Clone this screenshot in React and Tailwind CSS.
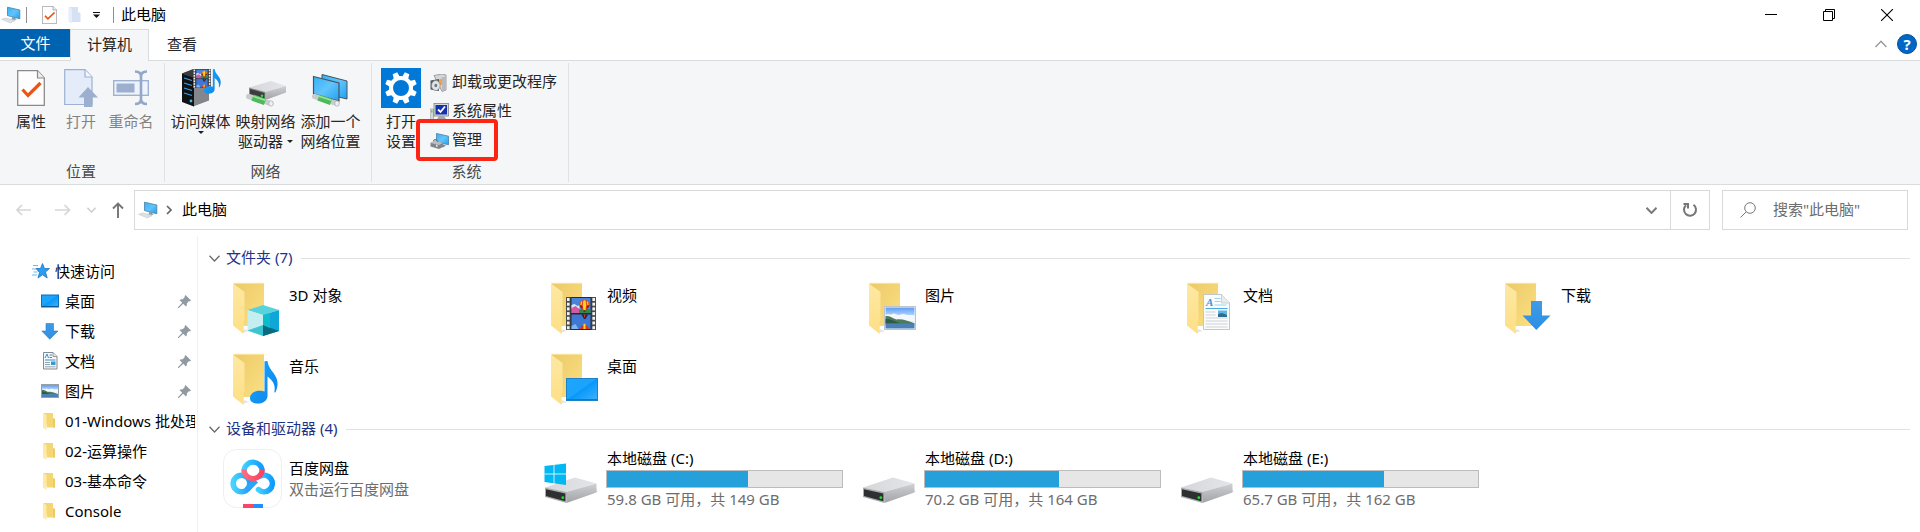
import React from 'react';

const defs = (
  <svg className="absolute h-0 w-0" aria-hidden="true">
    <defs>
      <linearGradient id="fBack" x1="0" y1="0" x2="1" y2="1">
        <stop offset="0" stopColor="#ecc968" />
        <stop offset="1" stopColor="#fbe083" />
      </linearGradient>
      <linearGradient id="fFront" x1="0" y1="0" x2="0" y2="1">
        <stop offset="0" stopColor="#fee8a3" />
        <stop offset="1" stopColor="#fddf85" />
      </linearGradient>
      <linearGradient id="screen" x1="0" y1="0" x2="1" y2="1">
        <stop offset="0" stopColor="#35b1f8" />
        <stop offset="0.5" stopColor="#62c4fb" />
        <stop offset="1" stopColor="#1fa0f2" />
      </linearGradient>
      <linearGradient id="desk" x1="0" y1="0" x2="1" y2="1">
        <stop offset="0" stopColor="#1ca7ff" />
        <stop offset="0.48" stopColor="#1ca3fc" />
        <stop offset="0.5" stopColor="#0698fa" />
        <stop offset="1" stopColor="#42b2fd" />
      </linearGradient>
      <linearGradient id="arrow" x1="0" y1="0" x2="0" y2="1">
        <stop offset="0" stopColor="#3f9be6" />
        <stop offset="1" stopColor="#2c8ee4" />
      </linearGradient>
      <linearGradient id="sky" x1="0" y1="0" x2="0" y2="1">
        <stop offset="0" stopColor="#5b9cf6" />
        <stop offset="0.5" stopColor="#cfe6fd" />
        <stop offset="1" stopColor="#e8f4fd" />
      </linearGradient>
      <linearGradient id="driveTop" x1="0" y1="0" x2="1" y2="0">
        <stop offset="0" stopColor="#d6d7da" />
        <stop offset="1" stopColor="#e4e5e8" />
      </linearGradient>
      <linearGradient id="driveSide" x1="0" y1="0" x2="0" y2="1">
        <stop offset="0" stopColor="#cfd0d3" />
        <stop offset="1" stopColor="#a2a3a6" />
      </linearGradient>
      <linearGradient id="panL" x1="0" y1="0" x2="1" y2="0">
        <stop offset="0" stopColor="#47d3fd" />
        <stop offset="1" stopColor="#1f9df8" />
      </linearGradient>
      <linearGradient id="panTop" x1="0" y1="0" x2="1" y2="0">
        <stop offset="0" stopColor="#3fd0fe" />
        <stop offset="1" stopColor="#0f9cff" />
      </linearGradient>
      <linearGradient id="panRed" x1="0" y1="0" x2="1" y2="0">
        <stop offset="0" stopColor="#fb6c80" />
        <stop offset="1" stopColor="#fc4263" />
      </linearGradient>
      <linearGradient id="note" x1="0" y1="0" x2="1" y2="1">
        <stop offset="0" stopColor="#1aa6ff" />
        <stop offset="1" stopColor="#0b84e8" />
      </linearGradient>
    </defs>
  </svg>
);

function PcIcon() {
  return (
    <svg width="20" height="18" viewBox="0 0 20 18" className="shrink-0">
      <path d="M6.500 1.200 18.800 4v8.800L6.500 9.600z" fill="url(#screen)" stroke="#4a7fa5" strokeWidth=".8" />
      <path d="M11 11.300l3.500 1v2l-3.500-1z" fill="#6c7d8a" />
      <path d="M9 13l3-.7 4 1.200-3 .9z" fill="#a9b4bd" />
      <path d="M.5 13.300 5 12l9 2.600L9.500 17z" fill="#dde1e6" stroke="#b9c0c8" strokeWidth=".5" />
    </svg>
  );
}

function CheckDoc({ className }) {
  return (
    <svg viewBox="0 0 28 36" className={className} preserveAspectRatio="none">
      <path d="M.7.7H20.500L27.300 8V35.300H.7z" fill="#fdfdfd" stroke="#8a8a8a" strokeWidth="1.300" />
      <path d="M20.500.7V8h6.800" fill="#eee" stroke="#8a8a8a" strokeWidth="1.200" />
      <path d="M5.500 19.500 11 25.500 23.500 13" fill="none" stroke="#ec5413" strokeWidth="3.200" />
    </svg>
  );
}

function OpenIcon() {
  return (
    <svg width="34" height="38" viewBox="0 0 34 38">
      <path d="M.7.700H21L28 8V35.500H.7z" fill="#e4ecfa" stroke="#9db1d3" strokeWidth="1.200" />
      <path d="M21 .7V8h7" fill="#f3f6fc" stroke="#9db1d3" strokeWidth="1.200" />
      <path d="M24 18 34 28.500H28.500V38H20V28.500H14.500z" fill="#9dafce" />
    </svg>
  );
}

function RenameIcon() {
  return (
    <svg width="36" height="36" viewBox="0 0 36 36">
      <rect x=".7" y="10.700" width="34.600" height="14.600" fill="#eef3fb" stroke="#9db1d3" strokeWidth="1.400" />
      <rect x="3.500" y="13.500" width="18" height="9" fill="#9dafce" />
      <path d="M22 1.500c4 0 6 1.500 6 5V29c0 3.500-2 5-6 5M34 1.500c-4 0-6 1.500-6 5V29c0 3.500 2 5 6 5" fill="none" stroke="#93a7c8" strokeWidth="2.600" />
    </svg>
  );
}

function Film({ x = 0, y = 0, w = 30, h = 33 }) {
  const holes = [1, 5.700, 10.400, 15.100, 19.800, 24.500, 29.200];
  return (
    <svg x={x} y={y} width={w} height={h} viewBox="0 0 30 33" preserveAspectRatio="none">
      <rect width="30" height="33" fill="#4b4b4b" />
      {holes.map((v) => (
        <g key={v} fill="#f2f2f2">
          <rect x="1" y={v} width="2.600" height="3" />
          <rect x="26.400" y={v} width="2.600" height="3" />
        </g>
      ))}
      <rect x="4.500" width="21" height="33" fill="#262a38" />
      <rect x="5.500" y="1" width="19" height="15" fill="#4a83dc" />
      <rect x="5.500" y="17.500" width="19" height="14.500" fill="#3f78d4" />
      <path d="M5.500 8l3-1 3 2 2-1v4H5.500z" fill="#d9e8fb" />
      <path d="M5.500 11l4-2 4 3 1 4h-9z" fill="#d45aa0" />
      <path d="M13 13l6-1.500 5.500 1V16H13z" fill="#2f8a4a" />
      <path d="M18.500 3c3.500 0 5 2.500 5 5 0 2.200-2 3.500-3.500 5.500h-3c-1.500-2-3.500-3.300-3.500-5.500 0-2.500 1.500-5 5-5z" fill="#d8361f" />
      <path d="M17.500 3.200h2l.8 4.800-.8 5h-2l-.8-5z" fill="#ffd21f" />
      <path d="M13.700 8.200l2 1v2.300zM23.300 8.200l-2 1v2.300z" fill="#2b1a14" />
      <path d="M15 4.500h1.500L15.500 8h-1.200zM22 4.500h-1.500l1 3.500h1.200z" fill="#ffd21f" />
      <path d="M17.500 13.500h2V15h-2z" fill="#5a3518" />
      <path d="M15.500 17.500h6.500l-2.500 4.500h-1.500z" fill="#2a2038" />
      <path d="M17.800 17.500h1.600l-.4 3h-.8z" fill="#d8361f" />
      <path d="M13.700 32a5 5.500 0 0 1 9.600 0z" fill="#d8361f" />
      <path d="M17.500 26.800h2V32h-2z" fill="#ffd21f" />
      <path d="M5.500 29l4-2 3 5h-7z" fill="#7fb4f0" />
    </svg>
  );
}

function MusicNote({ x, y, w, h }) {
  return (
    <svg x={x} y={y} width={w} height={h} viewBox="0 0 28 43" preserveAspectRatio="none">
      <path
        d="M14.500.3 17.500 0c.6 5 3 8 6 12 4.500 6 5.500 12 1.800 19.500l-1-.3c1.200-6 0-10.200-6.800-15.700V35c0 4-4 7.600-9.500 7.600C3 42.600 0 40.500 0 37.300c0-4.500 4.500-7.600 9.800-7.600 1.800 0 3.500.3 4.700.9z"
        fill="url(#note)"
      />
    </svg>
  );
}

function MediaIcon() {
  return (
    <svg width="40" height="40" viewBox="0 0 40 40">
      <path d="M1 5.500 12 1l16 4v27L12 38 1 33z" fill="#6d6e72" />
      <path d="M12 10l16-4v26.500L12 38.500z" fill="#85868b" />
      <path d="M1 5.500 13 9.500v29L1 34z" fill="#111214" />
      <path d="M1 5.500 13 1l14 3.500-15 5z" fill="#3a3b3f" />
      <path d="M3 10l8 2.500M3 15l8 2.500M3 20l8 2.500M3 25l8 2.500" stroke="#3a9fe8" strokeWidth="1.300" />
      <circle cx="10" cy="33" r="1.400" fill="#35c3f5" />
      <Film x="12" y="1" w="18" h="19" />
      <MusicNote x="23" y="1" w="17" h="25" />
    </svg>
  );
}

function Pipe({ x, y }) {
  return (
    <svg x={x} y={y} width="28" height="13" viewBox="0 0 28 13">
      <path d="M2.500 2.500 25 9.500" stroke="#c9cccf" strokeWidth="5" strokeLinecap="round" />
      <path d="M6.500 3.500 19 8" stroke="#4dbb5c" strokeWidth="6.500" />
      <path d="M7 2.300 19.500 6.300" stroke="#9be29f" strokeWidth="1.600" />
      <ellipse cx="25" cy="9.500" rx="2.200" ry="2.700" fill="#eef0f1" stroke="#9da2a5" strokeWidth=".6" />
    </svg>
  );
}

function NetDriveIcon() {
  return (
    <svg width="40" height="40" viewBox="0 0 40 40">
      <path d="M3 19.500 25 13l15 5-20.500 6z" fill="url(#driveTop)" />
      <path d="M19.500 24 40 18v6.500L19.500 32z" fill="url(#driveSide)" />
      <path d="M3 19.500 19.500 24v8L3 26.500z" fill="#8d8e90" />
      <path d="M4 20.900 18.500 25v5.500L4 26z" fill="#3c3d3f" />
      <circle cx="16" cy="27.700" r="1.200" fill="#2ee43b" />
      <Pipe x="0" y="26" />
    </svg>
  );
}

function NetPlaceIcon() {
  return (
    <svg width="38" height="40" viewBox="0 0 38 40">
      <path d="M10 6.500 35 13v18L10 25z" fill="url(#screen)" stroke="#46545e" strokeWidth="1" />
      <path d="M1.500 8.500 27 15v18L1.500 26z" fill="url(#screen)" stroke="#46545e" strokeWidth="1.200" />
      <Pipe x="0" y="26" />
    </svg>
  );
}

function GearIcon() {
  const teeth = [22.5, 67.5, 112.5, 157.5, 202.5, 247.5, 292.5, 337.5];
  return (
    <svg width="40" height="40" viewBox="0 0 40 40">
      <rect width="40" height="40" fill="#0078d7" />
      <circle cx="20" cy="20" r="10" fill="none" stroke="#fff" strokeWidth="4" />
      {teeth.map((a) => (
        <path key={a} d="M16.800 9.500 17.600 4h4.800l.8 5.500z" fill="#fff" transform={`rotate(${a} 20 20)`} />
      ))}
    </svg>
  );
}

function UninstallIcon() {
  return (
    <svg width="18" height="18" viewBox="0 0 18 18">
      <path d="M4 1.500 12 0l4 1v15l-4 1.500z" fill="#d5d6d8" stroke="#8f9194" strokeWidth=".8" />
      <path d="M12 3h3v13l-3 1z" fill="#b9babd" />
      <path d="M8 6l4-1.500v6L9 12z" fill="#f0a24c" />
      <path d="M.5 6.500 9 5v12L.5 15.500z" fill="#55585c" />
      <ellipse cx="5.800" cy="11.500" rx="4.300" ry="5" fill="#dfe3e6" stroke="#7e8387" strokeWidth=".7" />
      <ellipse cx="5.800" cy="11.500" rx="1.400" ry="1.700" fill="#6f7478" />
    </svg>
  );
}

function SysPropIcon() {
  return (
    <svg width="19" height="18" viewBox="0 0 19 18">
      <rect x="0" y="6" width="3.500" height="11.500" fill="#d6d7d9" stroke="#8b8d90" strokeWidth=".6" />
      <rect x="1" y="7.500" width="1.500" height="2" fill="#3bdc3f" />
      <rect x="4" y=".5" width="14.500" height="12.500" fill="#d9dadc" stroke="#808286" strokeWidth=".8" />
      <rect x="5.500" y="2" width="11.500" height="9.500" fill="#1431b0" />
      <path d="M8 6.500 10.500 9 15 3.500" fill="none" stroke="#fff" strokeWidth="1.800" />
      <path d="M9 13h5l3 4.500H6z" fill="#a5a7aa" />
    </svg>
  );
}

function ManageIcon() {
  return (
    <svg width="19" height="18" viewBox="0 0 19 18">
      <path d="M6.500 1.500 18.500 4.200v8.600L6.500 10z" fill="url(#screen)" stroke="#4a7fa5" strokeWidth=".8" />
      <path d="M12 12l4 1.500-3 2z" fill="#7d8a94" />
      <path d="M.5 11 5 8.500 13 11v4L9 17 .5 14.500z" fill="#7f858a" />
      <path d="M.5 11 5 8.500 13 11 9 13z" fill="#b9bdc1" />
      <path d="M3.500 9c0-2 3.500-2 4.500.8" fill="none" stroke="#5d6368" strokeWidth="1" />
      <path d="M6 12.500l1.500.4v2l-1.500-.4z" fill="#e7e9ea" />
    </svg>
  );
}

function Landscape({ x, y, w, h }) {
  return (
    <svg x={x} y={y} width={w} height={h} viewBox="0 0 32 24" preserveAspectRatio="none">
      <rect x=".5" y=".5" width="31" height="23" fill="#fff" stroke="#bcc5cf" />
      <rect x="1.500" y="1.500" width="29" height="21" fill="url(#sky)" />
      <path d="M1.500 9c3-2 5 .5 7-1s4 1 6 1 4-2 7-.5 6-.5 9 1V15h-29z" fill="#f2f8fe" />
      <path d="M1.500 10c4-.5 7 2 11 3.500 5-1 11 1 18 4v1h-29z" fill="#4c7a5d" />
      <path d="M1.500 13c5 0 9 2 15 4.500H1.500z" fill="#2e5b47" />
      <path d="M1.500 17.500h29v5h-29z" fill="#4a80b5" />
    </svg>
  );
}

function DocPage({ x, y, w, h }) {
  return (
    <svg x={x} y={y} width={w} height={h} viewBox="0 0 27 36">
      <path d="M.5.5H18.500L26.500 9V35.500H.5z" fill="#fafbfc" stroke="#c2c6ca" />
      <path d="M18.500.5V9h8" fill="#e9ebee" stroke="#c2c6ca" strokeWidth=".8" />
      <text x="3" y="12" fontSize="11" fontStyle="italic" fontWeight="bold" fontFamily="Liberation Serif, serif" fill="#3c95d0">A</text>
      <path d="M11.500 4.500h6M11.500 7.500h6M11.500 11h12" stroke="#9fd2ee" />
      <path d="M2.500 14.500h22" stroke="#4aa9dc" />
      <path d="M2.500 18h10M2.500 21h10M2.500 24h22M2.500 27h22M2.500 30h22M2.500 33h22" stroke="#cfd3d7" />
      <rect x="15" y="16.500" width="9" height="6.500" fill="#5fb4e8" />
      <path d="M15 20l4-1 5 2v2h-9z" fill="#2f6d8d" />
    </svg>
  );
}

function FolderTile({ kind }) {
  return (
    <svg width="60" height="60" viewBox="0 0 60 60" className="shrink-0">
      <path d="M20 54l7-2-5-2z" fill="#e6e6e6" />
      <path d="M11.500 4.300H42V47H20z" fill="url(#fBack)" />
      <path d="M11.500 4.300H42.500" stroke="#fbe59b" />
      <path d="M11 4.500 22.500 13V41l-.8 1.500V55L11 46.500z" fill="url(#fFront)" />
      {kind === '3d' && (
        <g>
          <path d="M41 26 57 31 41 36 25.500 31z" fill="#57d3de" />
          <path d="M25.500 31 41 36V57L25.500 51.500z" fill="#c4eef2" />
          <path d="M57 31 41 36V57L57 52z" fill="#0fa7d8" />
          <path d="M41 46 57 52 41 57z" fill="#0a6a80" />
          <path d="M41 46 25.500 51.500 41 57z" fill="#3cc5cf" />
          <path d="M41 36l7-2v15l-7-3z" fill="#0ebbcd" />
        </g>
      )}
      {kind === 'video' && <Film x="26" y="18" />}
      {kind === 'pic' && <Landscape x="26" y="27" w="32" h="24" />}
      {kind === 'doc' && <DocPage x="27" y="15" w="27" h="36" />}
      {kind === 'down' && <path d="M37 22H48V36.500H56.500L42.300 51 28.500 36.500H37z" fill="url(#arrow)" />}
      {kind === 'music' && <MusicNote x="28" y="11" w="28" h="43" />}
      {kind === 'desk' && (
        <g>
          <rect x="26.500" y="28.500" width="31" height="22" fill="url(#desk)" stroke="#1b82c8" />
          <path d="M27 49.500h30" stroke="#1579ba" />
        </g>
      )}
    </svg>
  );
}

function DriveIcon({ windows }) {
  return (
    <svg width="60" height="60" viewBox="0 0 60 60" className="shrink-0">
      <path d="M26 53 58 42.500 56 40z" fill="#e4e4e4" />
      <path d="M5 38.500 35 28.500 56.500 34.500 26 43z" fill="url(#driveTop)" />
      <path d="M26 43 56.500 34.500v9L26.500 54z" fill="url(#driveSide)" />
      <path d="M5 38.500 26.500 43V54L5 48z" fill="#a9aaac" />
      <path d="M6 40.300 25.300 44.500v7.800L6 47z" fill="#2e2f30" />
      <circle cx="22.800" cy="48.700" r="1.400" fill="#22e02d" />
      {windows && (
        <g>
          <path d="M4.500 17 26 14.500V36L4.500 33z" fill="#00b9f4" />
          <path d="M14 15v20M4.500 25H26" stroke="#e6f8fe" strokeWidth=".9" />
        </g>
      )}
    </svg>
  );
}

function NetdiskIcon() {
  return (
    <svg width="60" height="60" viewBox="0 0 60 60" className="shrink-0">
      <rect x="1.500" y=".5" width="58" height="58" rx="13" fill="#fff" stroke="#efefef" />
      <circle cx="19.500" cy="34.500" r="8.300" fill="none" stroke="url(#panL)" strokeWidth="5.600" />
      <path d="M25 40.500 34 31.500" stroke="#2aa5f8" strokeWidth="5.600" />
      <path d="M36.500 40.700a8.300 8.300 0 1 0 1.500-13.500" fill="none" stroke="url(#panTop)" strokeWidth="5.600" strokeLinecap="round" />
      <path d="M22 22.300a9 9 0 0 1 18.200 0" fill="none" stroke="url(#panTop)" strokeWidth="5.200" />
      <path d="M22 20.500a9.100 9.100 0 1 0 18.200 0" fill="none" stroke="url(#panRed)" strokeWidth="5.200" />
      <rect x="21" y="55" width="10" height="4" fill="#fb4467" />
      <rect x="31" y="55" width="10" height="4" fill="#2190fb" />
    </svg>
  );
}

function SideIcon({ kind }) {
  return (
    <svg width="18" height="18" viewBox="0 0 18 18" className="shrink-0">
      {kind === 'desk' && (
        <g>
          <rect x=".5" y="3" width="17" height="12" fill="url(#desk)" stroke="#0f6fb5" />
          <path d="M1 14.500h16" stroke="#0b5a96" />
        </g>
      )}
      {kind === 'down' && <path d="M5 1.500h7.500V9H17L8.800 17.300.8 9H5z" fill="url(#arrow)" stroke="#2b7dc4" strokeWidth=".6" />}
      {kind === 'doc' && (
        <g>
          <path d="M2.500.5H12L16 4.500V17H2.500z" fill="#f6f8fa" stroke="#85898d" />
          <path d="M12 .5v4h4" fill="#dfe3e6" stroke="#85898d" strokeWidth=".8" />
          <path d="M4 6l2-4 1.500 4M8.500 3h2.500M8.500 5.500h2.500M4 8h10.500" stroke="#2f95d2" fill="none" />
          <path d="M4 10.500h5M4 12.500h5M4 14.800h10.500" stroke="#8fa5b3" />
          <rect x="10" y="9.500" width="4.500" height="3.500" fill="#3a97d0" />
        </g>
      )}
      {kind === 'pic' && (
        <g>
          <Landscape x="0" y="2" w="18" h="14" />
          <rect x=".5" y="2.500" width="17" height="13" fill="none" stroke="#999fa5" />
        </g>
      )}
      {kind === 'folder' && (
        <g>
          <path d="M2.500 1H12v5l2 1v8.500H6z" fill="#f5d675" />
          <path d="M2 1 5.500 3v15L2 15.500z" fill="#fee9a6" />
          <path d="M12 6l2 1v8.500h-2z" fill="#eec964" />
        </g>
      )}
    </svg>
  );
}

function Pin() {
  return (
    <svg width="13" height="13" viewBox="0 0 13 13" className="ml-auto mr-1 shrink-0">
      <path d="M7.500 0 13 5.500l-1.200 1-.8-.4L8.800 8.500c.3 1.200 0 2.200-.8 3L5.200 8.800.8 13H0v-.8L4.200 7.800 1.500 5c.8-.8 2-1 3.200-.8l2.200-2.200-.4-.8z" fill="#8f9aa3" />
    </svg>
  );
}

const Caret = ({ className = '' }) => (
  <svg width="6" height="3" viewBox="0 0 6 3" className={className}>
    <path d="M0 0h6L3 3z" fill="#222" />
  </svg>
);

const Chevron = ({ w = 11, h = 7, color = '#6b6b6b', sw = 1.3, up, className = '' }) => (
  <svg width={w} height={h} viewBox="0 0 11 7" className={className}>
    <path d={up ? 'M.5 6.200 5.500 1l5 5.200' : 'M.5.800l5 5.200 5-5.200'} fill="none" stroke={color} strokeWidth={sw} />
  </svg>
);

function BigButton({ icon, lines, width, disabled, caret, below }) {
  return (
    <button type="button" disabled={disabled} className={`flex flex-col items-center ${width} ${disabled ? 'text-[#838383]' : 'text-[#262626]'}`}>
      <span className="mb-[3px] flex h-10 items-center justify-center">{icon}</span>
      {lines.map((l, i) => (
        <span key={l} className="flex items-center gap-1 whitespace-nowrap leading-5">
          {l}
          {caret && i === lines.length - 1 && <Caret />}
        </span>
      ))}
      {below && <Caret />}
    </button>
  );
}

function SmallButton({ icon, label, marked }) {
  return (
    <button type="button" className="relative flex h-[29px] w-fit items-center gap-[3px] whitespace-nowrap text-[#262626]">
      <span className="flex w-[19px]">{icon}</span>
      <span className="pb-[2px]">{label}</span>
      {marked && <span className="absolute -left-[14px] -right-[16px] -top-[7px] -bottom-[6px] rounded border-4 border-[#fd2414]" />}
    </button>
  );
}

function Group({ label, padding, children }) {
  return (
    <section className={`flex flex-col border-r border-[#dfe1e3] ${padding}`} aria-label={label}>
      <div className="flex min-h-[87px] pt-[5px]">{children}</div>
      <div className="mt-auto pb-px text-center leading-5 text-[#4a4a4a]">{label}</div>
    </section>
  );
}

function SectionHeader({ text }) {
  return (
    <h2 className="flex h-4 items-center text-[#1e3287]">
      <Chevron className="mr-[6px]" />
      <span className="whitespace-nowrap pb-[2px]">{text}</span>
      <span className="ml-[9px] mr-[10px] h-px flex-1 bg-[#e2e2e2]" />
    </h2>
  );
}

const folders = [
  ['3D 对象', '3d'],
  ['视频', 'video'],
  ['图片', 'pic'],
  ['文档', 'doc'],
  ['下载', 'down'],
  ['音乐', 'music'],
  ['桌面', 'desk'],
];

const drives = [
  { name: '本地磁盘 (C:)', info: '59.8 GB 可用，共 149 GB', used: 60, windows: true },
  { name: '本地磁盘 (D:)', info: '70.2 GB 可用，共 164 GB', used: 57 },
  { name: '本地磁盘 (E:)', info: '65.7 GB 可用，共 162 GB', used: 60 },
];

const quick = [
  ['桌面', 'desk', true],
  ['下载', 'down', true],
  ['文档', 'doc', true],
  ['图片', 'pic', true],
  ['01-Windows 批处理', 'folder'],
  ['02-运算操作', 'folder'],
  ['03-基本命令', 'folder'],
  ['Console', 'folder'],
];

export default function App() {
  return (
    <div className="flex min-h-screen flex-col bg-white font-['Noto_Sans','Noto_Sans_CJK_SC',sans-serif] text-[15px] text-black">
      {defs}
      <header className="flex h-[29px] items-center">
        <span className="ml-px"><PcIcon /></span>
        <span className="ml-[5px] h-4 w-px bg-[#8f8f8f]" />
        <button type="button" aria-label="属性" className="ml-[15px]"><CheckDoc className="h-[18px] w-[15px]" /></button>
        <button type="button" aria-label="新建文件夹" className="ml-[11px]">
          <svg width="13" height="18" viewBox="0 0 13 18">
            <path d="M1 1h9v5l2.500 1v9H4z" fill="#d5e2f4" />
            <path d="M.5 1 4 3v14.500L.5 15.500z" fill="#e6eefa" />
          </svg>
        </button>
        <button type="button" aria-label="自定义快速访问工具栏" className="ml-3">
          <svg width="7" height="6" viewBox="0 0 7 6">
            <path d="M0 .5h7" stroke="#111" />
            <path d="M0 2.500h7L3.500 6z" fill="#111" />
          </svg>
        </button>
        <span className="ml-[13px] h-4 w-px bg-[#8f8f8f]" />
        <h1 className="ml-[7px]">此电脑</h1>
        <div className="ml-auto mr-1 flex h-full">
          <button type="button" aria-label="最小化" className="flex w-[58px] items-center justify-center">
            <svg width="12" height="12" viewBox="0 0 12 12"><path d="M0 5.500h12" stroke="#000" /></svg>
          </button>
          <button type="button" aria-label="还原" className="flex w-[58px] items-center justify-center">
            <svg width="12" height="12" viewBox="0 0 12 12" fill="none" stroke="#000"><path d="M.5 2.500h9v9h-9zM2.500 2V.5h9v9H10" /></svg>
          </button>
          <button type="button" aria-label="关闭" className="flex w-[58px] items-center justify-center">
            <svg width="12" height="12" viewBox="0 0 12 12"><path d="M0 0 12 12M12 0 0 12" stroke="#000" strokeWidth="1.100" /></svg>
          </button>
        </div>
      </header>

      <nav className="flex h-8 border-b border-[#dadbdc]" role="tablist">
        <button type="button" role="tab" className="h-7 w-[70px] bg-[#0063b1] pl-px text-white">文件</button>
        <button type="button" role="tab" aria-selected="true" className="h-8 w-[79px] border-x border-t border-[#dadbdc] bg-[#f5f6f7] pb-[2px] text-[#262626]">计算机</button>
        <button type="button" role="tab" className="h-[30px] w-[66px] text-[#262626]">查看</button>
        <div className="ml-auto mr-[3px] flex h-[30px] items-center gap-[10px]">
          <button type="button" aria-label="折叠功能区"><Chevron up w={12} h={8} color="#9a9a9a" /></button>
          <button type="button" aria-label="帮助" className="flex h-5 w-5 items-center justify-center rounded-full border border-[#0a4f92] bg-[#0067c8] font-bold leading-none text-white">?</button>
        </div>
      </nav>

      <div className="flex h-[124px] border-b border-[#dadbdc] bg-[#f5f6f7] py-[2px]">
        <Group label="位置" padding="pl-[6px] pr-2">
          <BigButton width="w-[50px]" lines={['属性']} icon={<CheckDoc className="h-9 w-7" />} />
          <BigButton width="w-[50px]" lines={['打开']} disabled icon={<OpenIcon />} />
          <BigButton width="w-[50px]" lines={['重命名']} disabled icon={<RenameIcon />} />
        </Group>
        <Group label="网络" padding="pl-[3px] pr-2">
          <BigButton width="w-[65px]" lines={['访问媒体']} below icon={<MediaIcon />} />
          <BigButton width="w-[65px]" lines={['映射网络', '驱动器']} caret icon={<NetDriveIcon />} />
          <BigButton width="w-[65px]" lines={['添加一个', '网络位置']} icon={<NetPlaceIcon />} />
        </Group>
        <Group label="系统" padding="pl-[4px] pr-[11px]">
          <BigButton width="w-[50px]" lines={['打开', '设置']} icon={<GearIcon />} />
          <div className="ml-1 flex flex-col">
            <SmallButton icon={<UninstallIcon />} label="卸载或更改程序" />
            <SmallButton icon={<SysPropIcon />} label="系统属性" />
            <SmallButton icon={<ManageIcon />} label="管理" marked />
          </div>
        </Group>
      </div>

      <div className="flex items-center pb-[6px] pl-4 pr-3 pt-[5px]">
        <button type="button" aria-label="后退" disabled>
          <svg width="16" height="12" viewBox="0 0 16 12" fill="none" stroke="#d6d6d6" strokeWidth="1.700"><path d="M15 6H1M6 1 1 6l5 5" /></svg>
        </button>
        <button type="button" aria-label="前进" disabled className="ml-[23px]">
          <svg width="16" height="12" viewBox="0 0 16 12" fill="none" stroke="#d6d6d6" strokeWidth="1.700"><path d="M0 6h14M9.500 1l5 5-5 5" /></svg>
        </button>
        <button type="button" aria-label="最近浏览的位置" className="ml-4"><Chevron w={9} h={6} color="#d0d0d0" sw={2} /></button>
        <button type="button" aria-label="上移" className="ml-4">
          <svg width="12" height="16" viewBox="0 0 12 16" fill="none" stroke="#757575" strokeWidth="1.900"><path d="M6 16V1.500M1 6.500l5-5 5 5" /></svg>
        </button>
        <div className="ml-[10px] flex h-10 flex-1 items-center border border-[#d9d9d9] pl-[3px]">
          <PcIcon />
          <svg width="6" height="10" viewBox="0 0 6 10" className="ml-2 mr-[10px]"><path d="M1 1l4 4-4 4" fill="none" stroke="#666" strokeWidth="1.700" /></svg>
          <span className="pb-[2px]">此电脑</span>
          <button type="button" aria-label="历史记录" className="ml-auto mr-[13px]"><Chevron color="#7b7b7b" sw={2} /></button>
          <button type="button" aria-label="刷新" className="flex h-full w-[39px] items-center justify-center border-l border-[#d9d9d9]">
            <svg width="16" height="16" viewBox="0 0 16 16" fill="none" stroke="#757575" strokeWidth="2"><path d="M11.500 2.800A6 6 0 1 1 4 3.200" /><path d="M1.500 2H6v4.500" /></svg>
          </button>
        </div>
        <label className="ml-3 flex h-10 w-[186px] items-center border border-[#d9d9d9] pl-[17px]">
          <svg width="16" height="16" viewBox="0 0 16 16" fill="none" stroke="#777" className="shrink-0"><circle cx="10" cy="6" r="5.300" /><path d="M6.200 9.800.5 15.500" /></svg>
          <input type="text" aria-label="搜索" placeholder={'搜索"此电脑"'} className="ml-[17px] w-full min-w-0 bg-transparent pb-[2px] outline-none placeholder:text-[#6d6d6d]" />
        </label>
      </div>

      <div className="flex flex-1">
        <aside className="w-[198px] shrink-0 border-r border-[#f0f0f0] pt-5">
          <a href="#quick" className="flex h-[30px] items-center gap-[5px] pl-8">
            <svg width="18" height="16" viewBox="0 0 18 16">
              <path d="M10.500.5l2 5h5l-4 3.500 1.700 6-4.700-3.300L6 15l1.500-5.500L4 5.500h4.500z" fill="#2a9df0" stroke="#1976c4" strokeWidth=".8" />
              <path d="M1 2.500h5M0 6h4M1.500 9h4M0 12h5" stroke="#6bb9ee" />
            </svg>
            快速访问
          </a>
          {quick.map(([name, kind, pinned]) => (
            <a href="#item" key={name} className="mr-[2px] flex h-[30px] items-center overflow-hidden pl-[41px]">
              <SideIcon kind={kind} />
              <span className="ml-[6px] whitespace-nowrap">{name}</span>
              {pinned && <Pin />}
            </a>
          ))}
        </aside>
        <main className="min-w-0 flex-1 pl-[11px] pt-[14px]">
          <SectionHeader text="文件夹 (7)" />
          <div className="ml-[13px] mt-[13px] grid grid-cols-[repeat(auto-fill,318px)]">
            {folders.map(([name, kind]) => (
              <a href="#folder" key={name} className="flex h-[71px] gap-[7px]">
                <FolderTile kind={kind} />
                <span className="pt-[6px] leading-5">{name}</span>
              </a>
            ))}
          </div>
          <SectionHeader text="设备和驱动器 (4)" />
          <div className="ml-[13px] mt-3 grid grid-cols-[repeat(auto-fill,318px)]">
            <a href="#netdisk" className="flex gap-[7px]">
              <NetdiskIcon />
              <span className="flex flex-col pt-[9px]">
                <span className="leading-5">百度网盘</span>
                <span className="leading-[22px] text-[#6d6d6d]">双击运行百度网盘</span>
              </span>
            </a>
            {drives.map((d) => (
              <a href="#drive" key={d.name} className="flex gap-[6px]">
                <DriveIcon windows={d.windows} />
                <span className="flex w-[237px] flex-col">
                  <span className="mb-[2px] pl-px leading-[19px]">{d.name}</span>
                  <span className="flex h-[18px] border border-[#bcbcbc] bg-[#e6e6e6]">
                    <span className="bg-[#26a0da]" style={{ width: `${d.used}%` }} />
                  </span>
                  <span className="whitespace-nowrap pl-px leading-[22px] text-[#6d6d6d]">{d.info}</span>
                </span>
              </a>
            ))}
          </div>
        </main>
      </div>
    </div>
  );
}
